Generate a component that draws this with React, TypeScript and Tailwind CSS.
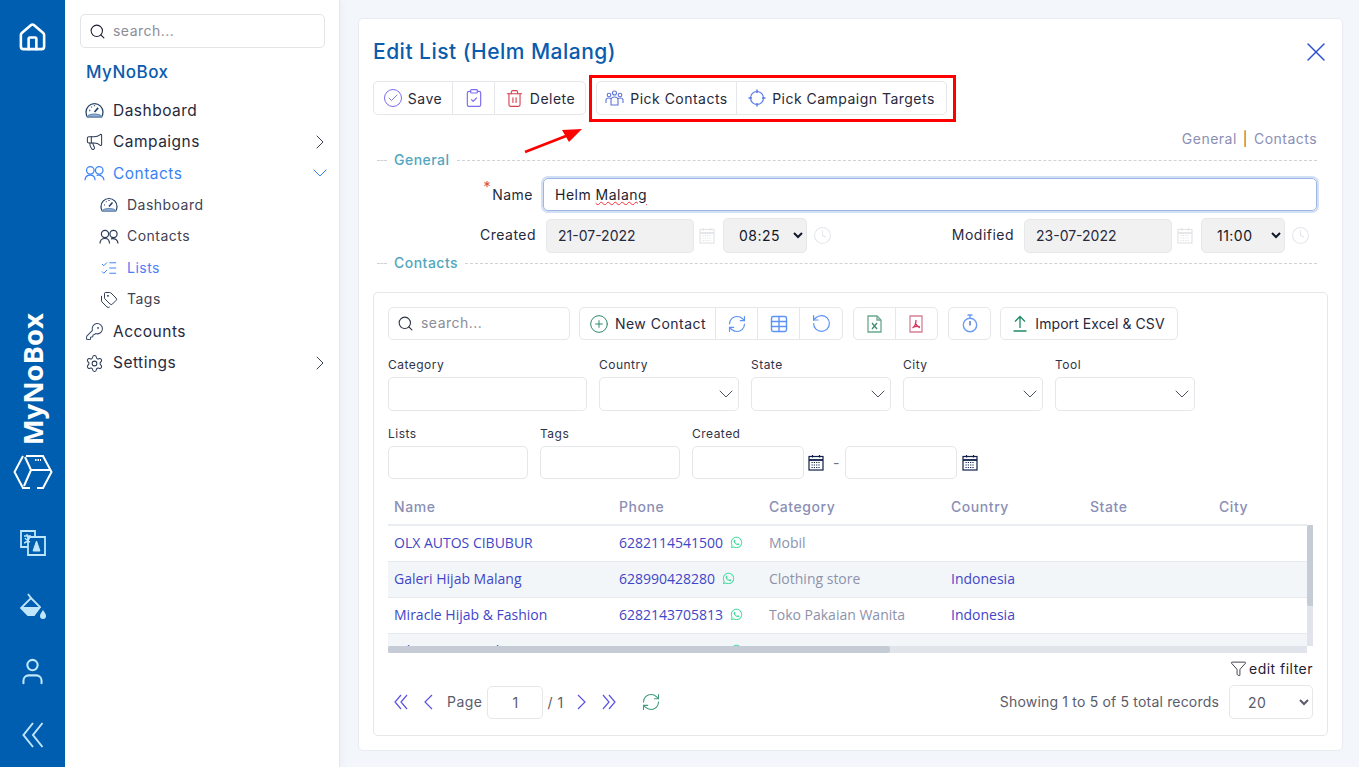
import { ReactNode } from "react";
import {
  Check,
  ChevronDown,
  ChevronRight,
  CirclePlus,
  ClipboardCheck,
  Clock,
  Funnel,
  House,
  KeyRound,
  ListChecks,
  Megaphone,
  RefreshCw,
  RotateCcw,
  Search,
  Settings,
  Table,
  Tags,
  Trash2,
  User,
  X,
} from "lucide-react";
import { FaWhatsapp } from "react-icons/fa";

type IconProps = { size?: number; strokeWidth?: number; className?: string };

/* ---------- Drawn icons ---------- */
function CubeLogo() {
  return (
    <svg width="40" height="36" viewBox="0 0 40 36" fill="none" stroke="#fff" strokeWidth="2">
      <path d="M10 2 L1.500 18 L10 34 H17" />
      <path d="M13 2 H30 L38.500 18 L30 34 H24" />
      <path d="M12 3 L18 16 H37 M18 16 L11 32" />
      <path d="M22 6 H28" strokeDasharray="1.500 1" />
    </svg>
  );
}

function TranslateIcon() {
  return (
    <svg width="26" height="26" viewBox="0 0 26 26" fill="none" stroke="#bfe6fb" strokeWidth="1.800">
      <path d="M15 7 V1 H1 V17 H8" />
      <path d="M8 7 H25 V25 H8 Z" />
      <path d="M4 6 H11 M7 4 V6 M10 6 C9 10 7 12 4 13 M5 8 C6 10 8 11 10 12" strokeWidth="1.400" />
      <path d="M13 21 L16.500 11 L20 21 Z" fill="#bfe6fb" strokeWidth="1" />
    </svg>
  );
}

function BucketIcon() {
  return (
    <svg width="26" height="28" viewBox="0 0 26 28" fill="none" stroke="#bfe6fb" strokeWidth="1.800">
      <path d="M8 1 L11 5" />
      <path d="M11 5 L20 14 L14 22 H8 L1 15 Z" />
      <path d="M3 15 H19 L14 21 H8 Z" fill="#bfe6fb" />
      <path d="M23 17 C25 20 26 21 26 23 A3 3 0 0 1 20 23 C20 21 21 20 23 17 Z" fill="#bfe6fb" stroke="none" />
    </svg>
  );
}

function GaugeIcon({ size = 18, className }: IconProps) {
  return (
    <svg width={size} height={size} viewBox="0 0 18 18" fill="none" stroke="currentColor" strokeWidth="1.200" className={className}>
      <path d="M2.200 15 C1 13.500 1 12 1 10.500 A8 8 0 0 1 17 10.500 C17 12 17 13.500 15.800 15 Z" />
      <path d="M2.500 15 C3 13 5 12.500 9 12.500 C13 12.500 15 13 15.500 15 Z" fill="#8fb0d6" stroke="#6d8fb8" />
      <path d="M9 10.500 L12.500 6.500" strokeWidth="1.500" />
      <path d="M4 9 H5 M6 5.500 L6.500 6 M9 4 V5" />
    </svg>
  );
}

function TwoPeopleIcon({ size = 18, className }: IconProps) {
  return (
    <svg width={size + 2} height={size} viewBox="0 0 20 18" fill="none" stroke="currentColor" strokeWidth="1.200" className={className}>
      <circle cx="6" cy="6" r="3.600" />
      <circle cx="14.500" cy="6" r="3.600" />
      <path d="M1 15.500 C1 12 3 10.500 6 10.500 C9 10.500 10.500 12 10.500 15.500" />
      <path d="M12 10.800 C16 10 19 12 19 15.500" />
    </svg>
  );
}

function CalendarIcon({ light }: { light?: boolean }) {
  const c = light ? "#e2e4e8" : "#0f1f4b";
  return (
    <svg width="16" height="17" viewBox="0 0 16 17" fill="none" stroke={c} strokeWidth="1.200">
      <rect x="1" y="2.500" width="14" height="13.500" />
      <path d="M1 6 H15" strokeWidth="1.800" />
      <path d="M4.500 1 V3.500 M11.500 1 V3.500" />
      <path d="M3.500 8.500 H12.500 M3.500 11 H12.500 M3.500 13.500 H12.500" strokeDasharray="1.200 1.100" />
    </svg>
  );
}

function PeopleIcon() {
  return (
    <svg width="19" height="17" viewBox="0 0 19 17" fill="none" stroke="#5f74d8" strokeWidth="1.100">
      <circle cx="9.500" cy="3" r="2" />
      <circle cx="4" cy="5" r="1.800" />
      <circle cx="15" cy="5" r="1.800" />
      <path d="M1 13 V10 C1 8.500 2.500 8 4 8 C5 8 5.500 8.300 6 8.800" />
      <path d="M18 13 V10 C18 8.500 16.500 8 15 8 C14 8 13.500 8.300 13 8.800" />
      <path d="M6 15 V10 C6 8 7.500 7 9.500 7 C11.500 7 13 8 13 10 V15 H6 Z" />
    </svg>
  );
}

function TargetIcon() {
  return (
    <svg width="18" height="18" viewBox="0 0 18 18" fill="none" stroke="#5b7be8" strokeWidth="1.200">
      <circle cx="9" cy="9" r="6.500" />
      <path d="M9 0.500 V4 M9 14 V17.500 M0.500 9 H4 M14 9 H17.500" strokeWidth="1.500" />
    </svg>
  );
}

function ExcelIcon() {
  return (
    <svg width="15" height="18" viewBox="0 0 15 18" fill="none" stroke="#6aa88f" strokeWidth="1.300">
      <path d="M1 1 H10 L14 5 V17 H1 Z" />
      <path d="M10 1 V5 H14" />
      <path d="M5 8 L10 14 M10 8 L5 14" stroke="#3f8a6b" />
    </svg>
  );
}

function PdfIcon() {
  return (
    <svg width="14" height="18" viewBox="0 0 14 18" fill="none" stroke="#d98095" strokeWidth="1.300">
      <path d="M1 1 H13 V17 H1 Z" />
      <path d="M7 5 C7 9 5 12 3.500 13 M7 9 C8 11 9.500 12.500 11 12.500 M5 12 C7 11 9 11 11 12" stroke="#d8355f" />
    </svg>
  );
}

function StopwatchIcon() {
  return (
    <svg width="16" height="19" viewBox="0 0 16 19" fill="none" stroke="#6d9cf5" strokeWidth="1.400">
      <circle cx="8" cy="11" r="6.700" />
      <path d="M5.500 1 H10.500 M8 1 V4" />
      <path d="M8 7 V11.500" stroke="#4c6fc4" />
    </svg>
  );
}

function UploadIcon() {
  return (
    <svg width="14" height="17" viewBox="0 0 14 17" fill="none" stroke="#1f8a62" strokeWidth="1.300">
      <path d="M7 13 V1.500 M2 6.500 L7 1.500 L12 6.500" />
      <path d="M0.500 16 H13.500" strokeWidth="1.500" />
    </svg>
  );
}

function RailChevrons() {
  return (
    <svg width="22" height="26" viewBox="0 0 22 26" fill="none" stroke="#bfe6fb" strokeWidth="2">
      <path d="M11 1 L1.500 13 L11 25 M20.500 1 L11 13 L20.500 25" />
    </svg>
  );
}

function Double({ flip }: { flip?: boolean }) {
  return (
    <svg width="14" height="16" viewBox="0 0 14 16" fill="none" stroke="#5a52e0" strokeWidth="1.200" className={flip ? "rotate-180" : ""}>
      <path d="M7 1 L1 8 L7 15 M13 1 L7 8 L13 15" />
    </svg>
  );
}

function Single({ flip }: { flip?: boolean }) {
  return (
    <svg width="9" height="16" viewBox="0 0 9 16" fill="none" stroke="#5a52e0" strokeWidth="1.200" className={flip ? "rotate-180" : ""}>
      <path d="M8 1 L1 8 L8 15" />
    </svg>
  );
}

function Arrow() {
  return (
    <svg width="60" height="26" viewBox="0 0 60 26" className="absolute left-[165px] top-[109px]">
      <path d="M1 24 L42 8" stroke="#ff0000" strokeWidth="2.500" />
      <path d="M58 1 L38 2 L45 14 Z" fill="#ff0000" />
    </svg>
  );
}

/* ---------- Small parts ---------- */
function Btn({ children, className = "" }: { children: ReactNode; className?: string }) {
  return (
    <div className={`flex h-full items-center justify-center gap-[6px] border-r border-[#e6e7ea] text-[14px] text-[#27293d] last:border-r-0 ${className}`}>
      {children}
    </div>
  );
}

function Group({ children, className = "" }: { children: ReactNode; className?: string }) {
  return (
    <div className={`flex h-full items-stretch rounded-[5px] border border-[#e6e7ea] bg-white ${className}`}>
      {children}
    </div>
  );
}

function Legend({ label }: { label: string }) {
  return (
    <div className="flex items-center pl-[4px] pr-[11px]">
      <div className="w-[10px] border-t border-dashed border-[#cfd2d6]" />
      <span className="mx-[7px] pb-[2px] text-[14px] font-medium text-[#52a6bd]">{label}</span>
      <div className="flex-1 border-t border-dashed border-[#cfd2d6]" />
    </div>
  );
}

function Field({ label, width, select, box = "h-[34px]" }: { label: string; width: string; select?: boolean; box?: string }) {
  return (
    <div className={width}>
      <div className="h-[18px] text-[12px] leading-[18px] text-[#30324a]">{label}</div>
      <div className={`relative mt-[3px] ${box} rounded-[5px] border border-[#e6e7ea] bg-white`}>
        {select && <ChevronDown className="absolute right-0 top-[4px] text-[#4b5563]" size={24} strokeWidth={1} />}
      </div>
    </div>
  );
}

function DateRow({ label, labelW, date, time }: { label: string; labelW: string; date: string; time: string }) {
  return (
    <>
      <div className={`${labelW} pb-[3px] pr-[1px] text-right text-[14px] text-[#27293d]`}>{label}</div>
      <div className="ml-[9px] flex h-[34px] w-[148px] items-center rounded-[5px] border border-[#e6e7ea] bg-[#f1f1f1] pb-[1px] pl-[11px] text-[14px] tracking-normal text-[#27293d]">
        {date}
      </div>
      <div className="flex w-[29px] justify-center pr-[4px]"><CalendarIcon light /></div>
      <select defaultValue={time} className="h-[35px] w-[84px] rounded-[5px] border border-[#e6e7ea] bg-[#f1f1f1] pl-[11px] text-[14px] text-[#111827]">
        <option>{time}</option>
      </select>
      <div className="ml-[3px] flex w-[25px] justify-center"><Clock size={19} strokeWidth={1.3} className="text-[#e4e6ec]" /></div>
    </>
  );
}

const nav = [
  { label: "Dashboard", icon: GaugeIcon, color: "text-[#27293d]", iconColor: "text-[#1f3f66]" },
  { label: "Campaigns", icon: Megaphone, color: "text-[#27293d]", iconColor: "text-[#2b3a55]", arrow: "right" },
  { label: "Contacts", icon: TwoPeopleIcon, color: "text-[#3b82f6]", iconColor: "text-[#3b82f6]", arrow: "down" },
  { label: "Dashboard", icon: GaugeIcon, color: "text-[#3f4254]", iconColor: "text-[#1f3f66]", sub: true },
  { label: "Contacts", icon: TwoPeopleIcon, color: "text-[#3f4254]", iconColor: "text-[#2b3a55]", sub: true },
  { label: "Lists", icon: ListChecks, color: "text-[#4f7df3]", iconColor: "text-[#3b82f6]", sub: true },
  { label: "Tags", icon: Tags, color: "text-[#3f4254]", iconColor: "text-[#2b3a55]", sub: true },
  { label: "Accounts", icon: KeyRound, color: "text-[#27293d]", iconColor: "text-[#3a4a6b]" },
  { label: "Settings", icon: Settings, color: "text-[#27293d]", iconColor: "text-[#2b3a55]", arrow: "right" },
];

const rows = [
  { name: "OLX AUTOS CIBUBUR", phone: "6282114541500", category: "Mobil", country: "" },
  { name: "Galeri Hijab Malang", phone: "628990428280", category: "Clothing store", country: "Indonesia" },
  { name: "Miracle Hijab & Fashion", phone: "6282143705813", category: "Toko Pakaian Wanita", country: "Indonesia" },
  { name: "Ethica Store Malang", phone: "6281234567890", category: "", country: "" },
];

function Sidebar() {
  return (
    <aside className="relative w-[275px] shrink-0 border-r border-[#e4e7ec] bg-white pl-[15px] pr-[14px] pt-[14px] shadow-[2px_0_8px_rgba(0,0,0,0.04)]">
      <div className="flex h-[34px] items-center gap-[7px] rounded-[5px] border border-[#e3e4e7] pb-[2px] pl-[8px] text-[14px] text-[#8b8d97]">
        <Search size={17} strokeWidth={1.5} className="mt-[2px] text-[#1c1f33]" />
        search...
      </div>
      <div className="mt-[12px] h-[24px] pl-[6px] text-[17px] font-medium leading-[24px] text-[#0a5cad]">MyNoBox</div>
      <nav className="mt-[10.500px]">
        {nav.map((item, i) => (
          <div key={i} className={`flex h-[31.600px] items-center ${item.sub ? "pl-[19px] text-[14px]" : "pl-[5px] text-[15.500px]"} ${item.color}`}>
            <span className="flex w-[19px] shrink-0 justify-center">
              <item.icon size={item.sub ? 18 : 19} strokeWidth={1.3} className={`shrink-0 ${item.iconColor}`} />
            </span>
            <span className={`ml-[9px] flex-1 ${item.sub ? "pb-[2px]" : ""}`}>{item.label}</span>
            {item.arrow === "right" && <ChevronRight size={24} strokeWidth={1} className="mr-[-7px] text-[#374151]" />}
            {item.arrow === "down" && <ChevronDown size={24} strokeWidth={1} className="mr-[-7px] text-[#3b82f6]" />}
          </div>
        ))}
      </nav>
    </aside>
  );
}

function Rail() {
  return (
    <aside className="flex w-[65px] shrink-0 flex-col items-center bg-[#005eb0]">
      <House size={31} strokeWidth={2} className="mt-[22px] text-white" />
      <div className="mt-auto rotate-180 text-[27.500px] font-bold leading-[30px] tracking-normal text-white [font-family:'Open_Sans',sans-serif] [writing-mode:vertical-rl]">
        MyNoBox
      </div>
      <div className="mb-[21px] mt-[9px]"><CubeLogo /></div>
      <div className="flex h-[64px] items-center"><TranslateIcon /></div>
      <div className="flex h-[64px] items-center"><BucketIcon /></div>
      <div className="flex h-[64px] items-center"><User size={31} strokeWidth={1.6} className="text-[#bfe6fb]" /></div>
      <div className="flex h-[64px] items-center"><RailChevrons /></div>
    </aside>
  );
}

function ContactsTable() {
  return (
    <div className="relative mt-[10px] h-[164px] overflow-hidden tracking-normal [font-family:'Open_Sans',sans-serif]">
      <table className="w-[919px] table-fixed border-collapse text-left text-[14px]">
        <colgroup>
          <col className="w-[225px]" />
          <col className="w-[150px]" />
          <col className="w-[182px]" />
          <col className="w-[139px]" />
          <col className="w-[129px]" />
          <col className="w-[94px]" />
        </colgroup>
        <thead>
          <tr className="h-[36px] border-b-2 border-[#e9edf2] text-[#8b8fb5] [font-family:Inter,sans-serif]">
            {["Name", "Phone", "Category", "Country", "State", "City"].map((h) => (
              <th key={h} className="px-[6px] font-medium tracking-[0.04em]">{h}</th>
            ))}
          </tr>
        </thead>
        <tbody>
          {rows.map((r, i) => (
            <tr key={r.name} className={`h-[36px] border-b border-[#e5e8ec] ${i % 2 ? "bg-[#f3f6f9]" : "bg-white"}`}>
              <td className="px-[6px] pb-[2px] text-[#3f46c8]">{r.name}</td>
              <td className="px-[6px] pb-[2px] text-[#3f46c8]">
                <span className="inline-flex items-center gap-[7px]">
                  {r.phone}
                  <FaWhatsapp size={13} className="text-[#45dba0]" />
                </span>
              </td>
              <td className="px-[6px] pb-[2px] text-[#8d92ab]">{r.category}</td>
              <td className="px-[6px] pb-[2px] text-[#3f46c8]">{r.country}</td>
              <td />
              <td />
            </tr>
          ))}
        </tbody>
      </table>
      {/* fake scrollbars */}
      <div className="absolute bottom-[7px] left-[919px] top-[36px] w-[7px] bg-[#e1e5eb]">
        <div className="h-[81px] rounded-[2px] bg-[#c6ccd5]" />
      </div>
      <div className="absolute bottom-0 left-0 h-[7px] w-[919px] bg-[#e1e5eb]">
        <div className="h-full w-[502px] rounded-[2px] bg-[#c6ccd5]" />
      </div>
    </div>
  );
}

function ContactsPanel() {
  return (
    <section className="mt-[19px] h-[444px] rounded-[5px] border border-[#e6e7ea] bg-white px-[14px] pt-[14px]">
      <div className="flex h-[33px] items-stretch">
        <div className="flex w-[182px] items-center gap-[7px] rounded-[5px] border border-[#e6e7ea] pb-[2px] pl-[8px] text-[14px] text-[#8b8d97]">
          <Search size={17} strokeWidth={1.5} className="mt-[2px] text-[#2b3040]" />
          search...
        </div>
        <Group className="ml-[9px] w-[264px]">
          <Btn className="w-[136px]"><CirclePlus size={20} strokeWidth={1.2} className="text-[#2f8a6b]" />New Contact</Btn>
          <Btn className="w-[42px]"><RefreshCw size={20} strokeWidth={1.4} className="text-[#5c93f5]" /></Btn>
          <Btn className="w-[42px]"><Table size={20} strokeWidth={1.7} className="text-[#5c93f5]" /></Btn>
          <Btn className="w-[42px]"><RotateCcw size={21} strokeWidth={1.4} className="text-[#5c93f5]" /></Btn>
        </Group>
        <Group className="ml-[10px] w-[85px]">
          <Btn className="w-[42px]"><ExcelIcon /></Btn>
          <Btn className="w-[42px]"><PdfIcon /></Btn>
        </Group>
        <Group className="ml-[10px] w-[43px]">
          <Btn className="w-full"><StopwatchIcon /></Btn>
        </Group>
        <Group className="ml-[9px] w-[178px]">
          <Btn className="w-full gap-[8px] tracking-[0.005em]"><UploadIcon />Import Excel &amp; CSV</Btn>
        </Group>
      </div>
      <div className="mt-[16px] flex gap-[12px]">
        <Field label="Category" width="w-[199px]" />
        <Field label="Country" width="w-[140px]" select />
        <Field label="State" width="w-[140px]" select />
        <Field label="City" width="w-[140px]" select />
        <Field label="Tool" width="w-[140px]" select />
      </div>
      <div className="mt-[14px] flex gap-[12px]">
        <Field label="Lists" width="w-[140px]" box="h-[33px]" />
        <Field label="Tags" width="w-[140px]" box="h-[33px]" />
        <Field label="Created" width="w-[112px]" box="h-[33px]" />
        <div className="ml-[-8px] mt-[21px] flex h-[33px] items-center">
          <CalendarIcon />
          <span className="ml-[9px] mr-[5px] text-[14px] text-[#6b7280]">-</span>
          <div className="h-[33px] w-[112px] rounded-[5px] border border-[#e6e7ea]" />
          <span className="ml-[5px]"><CalendarIcon /></span>
        </div>
      </div>
      <ContactsTable />
      <div className="mt-[5px] flex h-[20px] items-center justify-end gap-[2px] text-[14px] text-[#1f2233]">
        <Funnel size={17} strokeWidth={1.2} />
        edit filter
      </div>
      <div className="mt-[7px] flex h-[34px] items-center text-[14px] text-[#5a5c6b]">
        <span className="ml-[6px]"><Double /></span>
        <span className="ml-[16px]"><Single /></span>
        <span className="ml-[14px] pb-[2px]">Page</span>
        <div className="ml-[5px] flex h-[33px] w-[56px] items-center justify-center rounded-[5px] border border-[#e6e7ea]">1</div>
        <span className="ml-[4px]">/ 1</span>
        <span className="ml-[13px]"><Single flip /></span>
        <span className="ml-[16px]"><Double flip /></span>
        <RefreshCw size={20} strokeWidth={1.3} className="ml-[25px] text-[#3f9a78]" />
        <span className="ml-auto pb-[2px] tracking-[0.013em]">Showing 1 to 5 of 5 total records</span>
        <select defaultValue="20" className="ml-[10px] h-[34px] w-[84px] rounded-[5px] border border-[#e6e7ea] bg-white pl-[14px] text-[14px]">
          <option>20</option>
        </select>
      </div>
    </section>
  );
}

function EditCard() {
  return (
    <div className="relative h-[733px] rounded-[5px] border border-[#e8ebf0] bg-white px-[14px] pt-[16px]">
      {/* Title */}
      <div className="flex h-[34px] items-center justify-between">
        <h1 className="text-[21px] font-medium text-[#0a5cad]">Edit List (Helm Malang)</h1>
        <X size={32} strokeWidth={1.1} className="mr-[-4px] text-[#2b4fd0]" />
      </div>

      {/* Actions */}
      <div className="mt-[12px] flex h-[34px]">
        <Group className="w-[213px]">
          <Btn className="w-[79px]"><span className="flex h-[18px] w-[18px] items-center justify-center rounded-full border border-[#7c6cf0]"><Check size={12} strokeWidth={1.5} className="text-[#4a55b8]" /></span>Save</Btn>
          <Btn className="w-[42px]"><ClipboardCheck size={20} strokeWidth={1.4} className="text-[#7c6cf0]" /></Btn>
          <Btn className="flex-1"><Trash2 size={19} strokeWidth={1.4} className="text-[#d8404f]" />Delete</Btn>
        </Group>
        <Group className="ml-[10px] w-[351px]">
          <Btn className="w-[140px]"><PeopleIcon />Pick Contacts</Btn>
          <Btn className="flex-1"><TargetIcon />Pick Campaign Targets</Btn>
        </Group>
      </div>

      {/* Red annotation over the shot */}
      <div className="absolute left-[230px] top-[56px] h-[47px] w-[367px] border-[3px] border-[#ff0000]" />
      <Arrow />

      <div className="mt-[14px] flex h-[20px] items-center justify-end gap-[6px] pb-[2px] pr-[11px] text-[14px] text-[#8b8fb5]">
        General <span className="text-[#a8651f]">|</span> Contacts
      </div>
      <div className="flex h-[22px] flex-col justify-center"><Legend label="General" /></div>

      <div className="mt-[7px] flex h-[33px] items-center pr-[11px]">
        <div className="w-[160px] pb-[1px] text-right text-[14px] text-[#27293d]"><sup className="mr-[1px] text-[15px] text-[#d9534f]">*</sup>Name</div>
        <div className="ml-[10px] flex h-full flex-1 items-center rounded-[5px] border border-[#9db7e4] pb-[1px] pl-[11px] text-[14px] text-[#1c1f33] shadow-[0_0_0_2px_#d3dff3]">
          Helm&nbsp;<span className="underline decoration-red-500 decoration-wavy decoration-1">Malang</span>
        </div>
      </div>

      <div className="mt-[7px] flex h-[35px] items-center">
        <DateRow label="Created" labelW="w-[164px]" date="21-07-2022" time="08:25" />
        <DateRow label="Modified" labelW="w-[180px]" date="23-07-2022" time="11:00" />
      </div>

      <div className="flex h-[20px] flex-col justify-center"><Legend label="Contacts" /></div>

      <ContactsPanel />
    </div>
  );
}

export default function App() {
  return (
    <div className="flex h-[767px] overflow-hidden bg-[#f3f6fb] tracking-[0.03em] [font-family:Inter,sans-serif]">
      <Rail />
      <Sidebar />
      <main className="flex-1 pb-[16px] pl-[18px] pr-[16px] pt-[18px]">
        <EditCard />
      </main>
    </div>
  );
}
